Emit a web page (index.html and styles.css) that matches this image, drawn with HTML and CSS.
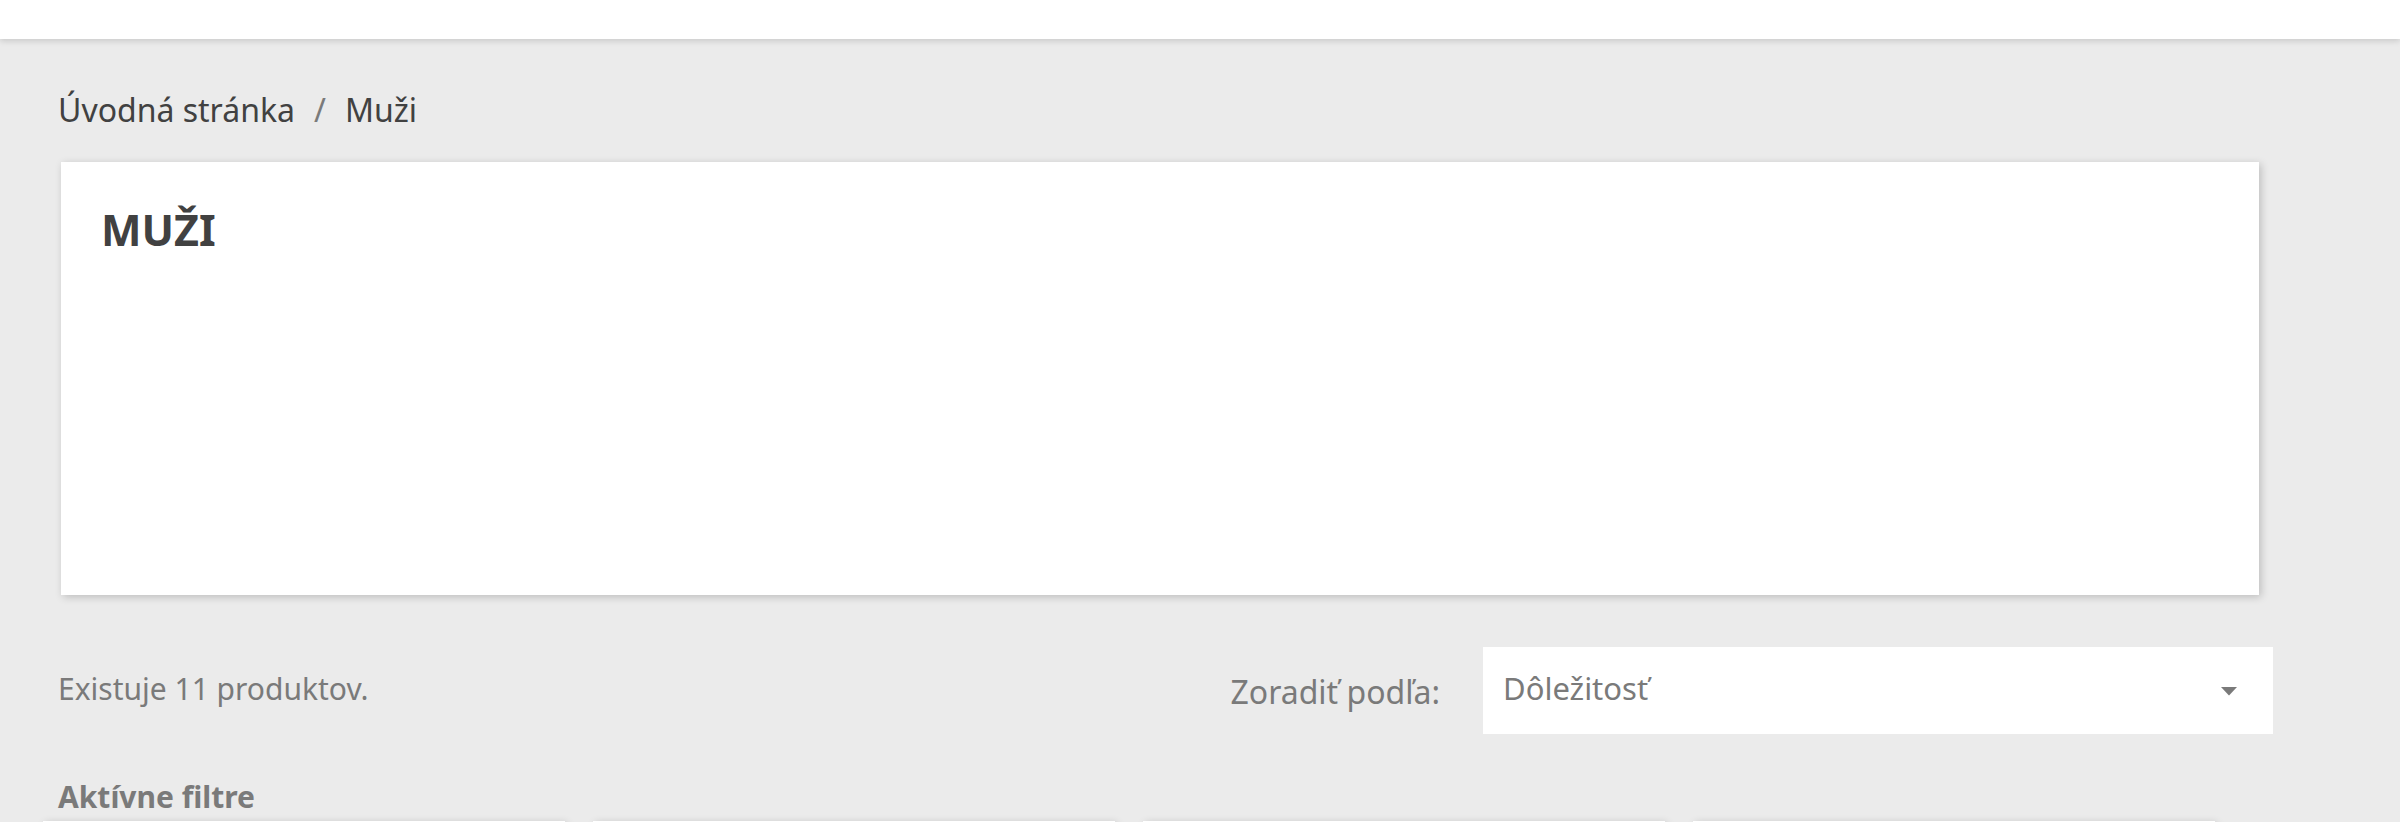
FILE: index.html
```html
<!DOCTYPE html>
<html lang="sk">
<head>
<meta charset="utf-8">
<title>Muži</title>
<link rel="stylesheet" href="styles.css">
</head>
<body>
<header class="site-header"></header>
<main class="wrapper">
  <nav class="breadcrumb">
    <span class="crumb">Úvodná stránka</span>
    <span class="sep">/</span>
    <span class="crumb">Muži</span>
  </nav>
  <section class="category-card">
    <h1 class="category-title">MUŽI</h1>
  </section>
  <div class="list-top">
    <p class="total">Existuje 11 produktov.</p>
    <div class="sort">
      <span class="sort-label">Zoradiť podľa:</span>
      <div class="select">
        <span class="select-value">Dôležitosť</span>
        <svg class="caret" width="18" height="10" viewBox="0 0 18 10"><path d="M1 1h16L9 9.5z" fill="#7a7a7a"/></svg>
      </div>
    </div>
  </div>
  <h2 class="filters-title">Aktívne filtre</h2>
  <div class="products">
    <div class="product"></div>
    <div class="product"></div>
    <div class="product"></div>
    <div class="product"></div>
  </div>
</main>
</body>
</html>
```

FILE: styles.css
```css
html, body {
  margin: 0;
  padding: 0;
}
body {
  background: #ebebeb;
  font-family: "Noto Sans", "Open Sans", sans-serif;
  color: #414141;
  overflow: hidden;
}
.site-header {
  height: 39px;
  background: #fff;
  box-shadow: 0 2px 6px rgba(0, 0, 0, 0.15);
  position: relative;
  z-index: 2;
}
.wrapper {
  padding: 0 0 0 58px;
  width: 2215px;
}
.breadcrumb {
  margin-top: 48px;
  font-size: 32px;
  line-height: 45px;
  height: 45px;
  color: #414141;
  display: flex;
}
.sep {
  color: #7a7a7a;
  padding: 0 19px;
}
.category-card {
  margin: 30px 0 0 3px;
  width: 2198px;
  height: 433px;
  box-sizing: border-box;
  background: #fff;
  box-shadow: 2px 2px 8px 0 rgba(0, 0, 0, 0.2);
  padding: 45px 40px 0;
}
.category-title {
  margin: 0;
  font-size: 43px;
  line-height: 45px;
  font-weight: 700;
  color: #414141;
}
.list-top {
  margin-top: 52px;
  height: 87px;
  display: flex;
  justify-content: space-between;
  align-items: flex-start;
}
.total {
  margin: 22px 0 0;
  font-size: 30px;
  line-height: 40px;
  color: #7a7a7a;
}
.sort {
  display: flex;
  align-items: flex-start;
  gap: 43px;
}
.sort-label {
  margin-top: 25px;
  font-size: 32px;
  line-height: 40px;
  color: #7a7a7a;
}
.select {
  width: 790px;
  height: 87px;
  box-sizing: border-box;
  background: #fff;
  padding: 21px 35px 0 20px;
  display: flex;
  justify-content: space-between;
  align-items: flex-start;
}
.select-value {
  font-size: 31px;
  line-height: 40px;
  color: #7a7a7a;
}
.caret {
  margin-top: 18px;
}
.filters-title {
  margin: 43px 0 0;
  font-size: 30px;
  line-height: 40px;
  font-weight: 700;
  color: #7a7a7a;
}
.products {
  margin: 4px 0 0 -15px;
  display: flex;
  gap: 28px;
}
.product {
  width: 522px;
  height: 400px;
  background: #fff;
  box-shadow: 2px 2px 8px 0 rgba(0, 0, 0, 0.2);
}
```
